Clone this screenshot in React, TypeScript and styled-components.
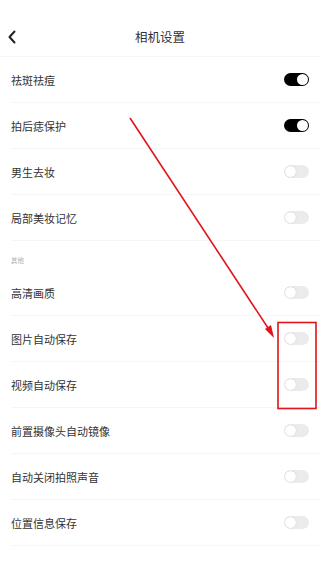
import React from "react";
import styled, { createGlobalStyle } from "styled-components";

const Global = createGlobalStyle`
  html, body { margin: 0; padding: 0; background: #fff; }
  body { font-family: "Noto Sans CJK SC", "Noto Sans", sans-serif; }
`;

const Page = styled.div`
  position: relative;
  width: 320px;
  height: 568px;
  overflow: hidden;
  background: #fff;
`;

const Header = styled.div`
  height: 57px;
  display: flex;
  align-items: flex-start;
  justify-content: center;
  position: relative;
  border-bottom: 1px solid #f7f7f7;
  box-sizing: border-box;
  padding-top: 28px;
`;

const Back = styled.div`
  position: absolute;
  left: 6px;
  top: 30px;
  width: 12px;
  height: 14px;
  display: flex;
`;

const Title = styled.div`
  font-size: 12.5px;
  line-height: 18px;
  color: #333;
`;

const List = styled.div`
  display: flex;
  flex-direction: column;
`;

const Row = styled.div`
  height: 46px;
  margin-left: 11px;
  padding-right: 11px;
  display: flex;
  align-items: center;
  justify-content: space-between;
  border-bottom: 1px solid #f6f6f6;
  box-sizing: border-box;
`;

const Label = styled.span`
  font-size: 11px;
  color: #333;
`;

const Section = styled.div`
  height: 29px;
  padding-left: 11px;
  padding-top: 14px;
  box-sizing: border-box;
  font-size: 6.5px;
  color: #b0b0b0;
  line-height: 10px;
`;

const Track = styled.div<{ $on: boolean }>`
  width: 25px;
  height: 13px;
  border-radius: 7px;
  background: ${(p) => (p.$on ? "#000" : "#ebebee")};
  position: relative;
`;

const Knob = styled.div<{ $on: boolean }>`
  position: absolute;
  top: 1px;
  left: ${(p) => (p.$on ? "13px" : "1px")};
  width: 11px;
  height: 11px;
  border-radius: 50%;
  background: #fff;
  box-shadow: ${(p) => (p.$on ? "none" : "0 0 1px rgba(0,0,0,0.25)")};
`;

const Overlay = styled.svg`
  position: absolute;
  left: 0;
  top: 0;
  pointer-events: none;
`;

const Toggle = ({ on }: { on: boolean }) => (
  <Track $on={on}>
    <Knob $on={on} />
  </Track>
);

const group1: [string, boolean][] = [
  ["祛斑祛痘", true],
  ["拍后痣保护", true],
  ["男生去妆", false],
  ["局部美妆记忆", false],
];
const group2: [string, boolean][] = [
  ["高清画质", false],
  ["图片自动保存", false],
  ["视频自动保存", false],
  ["前置摄像头自动镜像", false],
  ["自动关闭拍照声音", false],
  ["位置信息保存", false],
];

export default function App() {
  return (
    <>
      <Global />
      <Page>
        <Header>
          <Back>
            <svg width="12" height="14" viewBox="0 0 12 14">
              <path d="M8.5 1.5 L3.5 7 L8.5 12.5" fill="none" stroke="#222" strokeWidth="2" strokeLinecap="round" strokeLinejoin="round" />
            </svg>
          </Back>
          <Title>相机设置</Title>
        </Header>
        <List>
          {group1.map(([t, on]) => (
            <Row key={t}>
              <Label>{t}</Label>
              <Toggle on={on} />
            </Row>
          ))}
          <Section>其他</Section>
          {group2.map(([t, on]) => (
            <Row key={t}>
              <Label>{t}</Label>
              <Toggle on={on} />
            </Row>
          ))}
        </List>
        <Overlay width="320" height="568" viewBox="0 0 320 568">
          <line x1="130" y1="118" x2="270" y2="331" stroke="#e0141a" strokeWidth="1.6" />
          <path d="M274 338 L265 329 L271 325 Z" fill="#e0141a" />
          <rect x="278" y="322.5" width="38" height="86" fill="none" stroke="#e0141a" strokeWidth="1.6" />
        </Overlay>
      </Page>
    </>
  );
}
